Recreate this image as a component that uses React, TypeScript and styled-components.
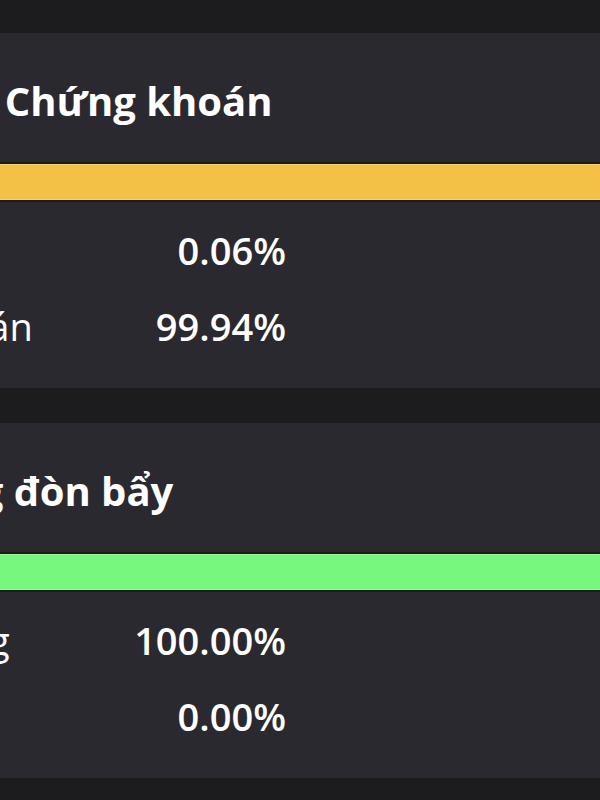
import React from "react";
import styled, { createGlobalStyle } from "styled-components";

const GlobalStyle = createGlobalStyle`
  html, body {
    margin: 0;
    padding: 0;
    background: #1c1c1f;
    overflow: hidden;
  }
  body {
    font-family: "Open Sans", "Noto Sans", sans-serif;
    color: #ffffff;
  }
`;

// the view is scrolled sideways, so the start of each card sits off-screen
const Screen = styled.div`
  width: 1000px;
  margin-left: -228px;
  padding-top: 33px;
  display: flex;
  flex-direction: column;
  gap: 35px;
`;

const Card = styled.section`
  background: #2a2930;
  padding: 44px 0 24px 24px;
  height: 355px;
  box-sizing: border-box;
`;

const Title = styled.h2`
  margin: 0;
  font-size: 40px;
  line-height: 48px;
  font-weight: 700;
  white-space: nowrap;
`;

const Track = styled.div`
  margin: 39px 0 12px -24px;
  height: 36px;
  display: flex;
  background: #3a3a40;
  box-shadow: 0 0 0 2px #1e1c16;
`;

const Segment = styled.div<{ $color: string }>`
  height: 100%;
  background: ${({ $color }) => $color};
  border-top: 1px solid rgba(255, 255, 255, 0.25);
  border-bottom: 1px solid rgba(255, 255, 255, 0.25);
  box-sizing: border-box;
`;

const Row = styled.div`
  display: flex;
  align-items: center;
  height: 76px;
`;

const Label = styled.span`
  flex: 0 0 270px;
  font-size: 38px;
  font-weight: 400;
  white-space: nowrap;
`;

const Value = styled.span`
  flex: 0 0 220px;
  text-align: right;
  font-size: 38px;
  font-weight: 600;
`;

interface Item {
  label: string;
  value: number;
  color: string;
}

interface Props {
  title: string;
  items: Item[];
}

const RatioCard: React.FC<Props> = ({ title, items }) => (
  <Card>
    <Title>{title}</Title>
    <Track>
      {items.map((item) => (
        <Segment
          key={item.label}
          $color={item.color}
          style={{ width: `${item.value}%` }}
        />
      ))}
    </Track>
    {items.map((item) => (
      <Row key={item.label}>
        <Label>{item.label}</Label>
        <Value>{item.value.toFixed(2)}%</Value>
      </Row>
    ))}
  </Card>
);

const App: React.FC = () => (
  <>
    <GlobalStyle />
    <Screen>
      <RatioCard
        title="Tỉ lệ tiền / Chứng khoán"
        items={[
          { label: "Tiền", value: 0.06, color: "#4aa3f0" },
          { label: "Chứng khoán", value: 99.94, color: "#f3c145" },
        ]}
      />
      <RatioCard
        title="Tỷ lệ Dùng đòn bẩy"
        items={[
          { label: "Không dùng", value: 100, color: "#78f77f" },
          { label: "Có dùng", value: 0, color: "#f05a5a" },
        ]}
      />
    </Screen>
  </>
);

export default App;
